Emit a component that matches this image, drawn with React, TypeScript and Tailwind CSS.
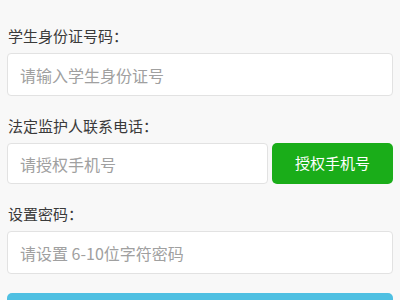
import React from "react";

const font = { fontFamily: '"Noto Sans CJK SC", "Noto Sans", sans-serif' };

const Label = ({ text }: { text: string }) => (
  <p className="text-[15px] leading-[20px] text-[#3a3a3a] pl-[1px]">{text}</p>
);

const App = () => {
  return (
    <main className="w-[400px] h-[300px] overflow-hidden bg-[#f8f8f8] px-[7px] pt-[26px]" style={font}>
      <div className="flex flex-col gap-[7px]">
        <Label text="学生身份证号码：" />
        <input
          className="h-[43px] w-full rounded-[4px] border border-[#e2e2e2] bg-white pl-[12px] text-[16px] outline-none placeholder:text-[#a0a0a0]"
          placeholder="请输入学生身份证号"
        />
      </div>
      <div className="flex flex-col gap-[7px] mt-[20px]">
        <Label text="法定监护人联系电话：" />
        <div className="flex gap-[4px] h-[41px]">
          <input
            className="flex-1 min-w-0 rounded-[4px] border border-[#e2e2e2] bg-white pl-[12px] text-[16px] outline-none placeholder:text-[#a0a0a0]"
            placeholder="请授权手机号"
          />
          <button className="w-[121px] rounded-[5px] bg-[#1aad19] text-white text-[15px]">授权手机号</button>
        </div>
      </div>
      <div className="flex flex-col gap-[7px] mt-[20px]">
        <Label text="设置密码：" />
        <input
          className="h-[43px] w-full rounded-[4px] border border-[#e2e2e2] bg-white pl-[12px] text-[16px] outline-none placeholder:text-[#a0a0a0]"
          placeholder="请设置 6-10位字符密码"
        />
      </div>
      {/* submit button, only its top edge is on screen */}
      <div className="mt-[19px] h-[44px] w-full rounded-[5px] bg-[#4fc0e2]"></div>
    </main>
  );
};

export default App;
